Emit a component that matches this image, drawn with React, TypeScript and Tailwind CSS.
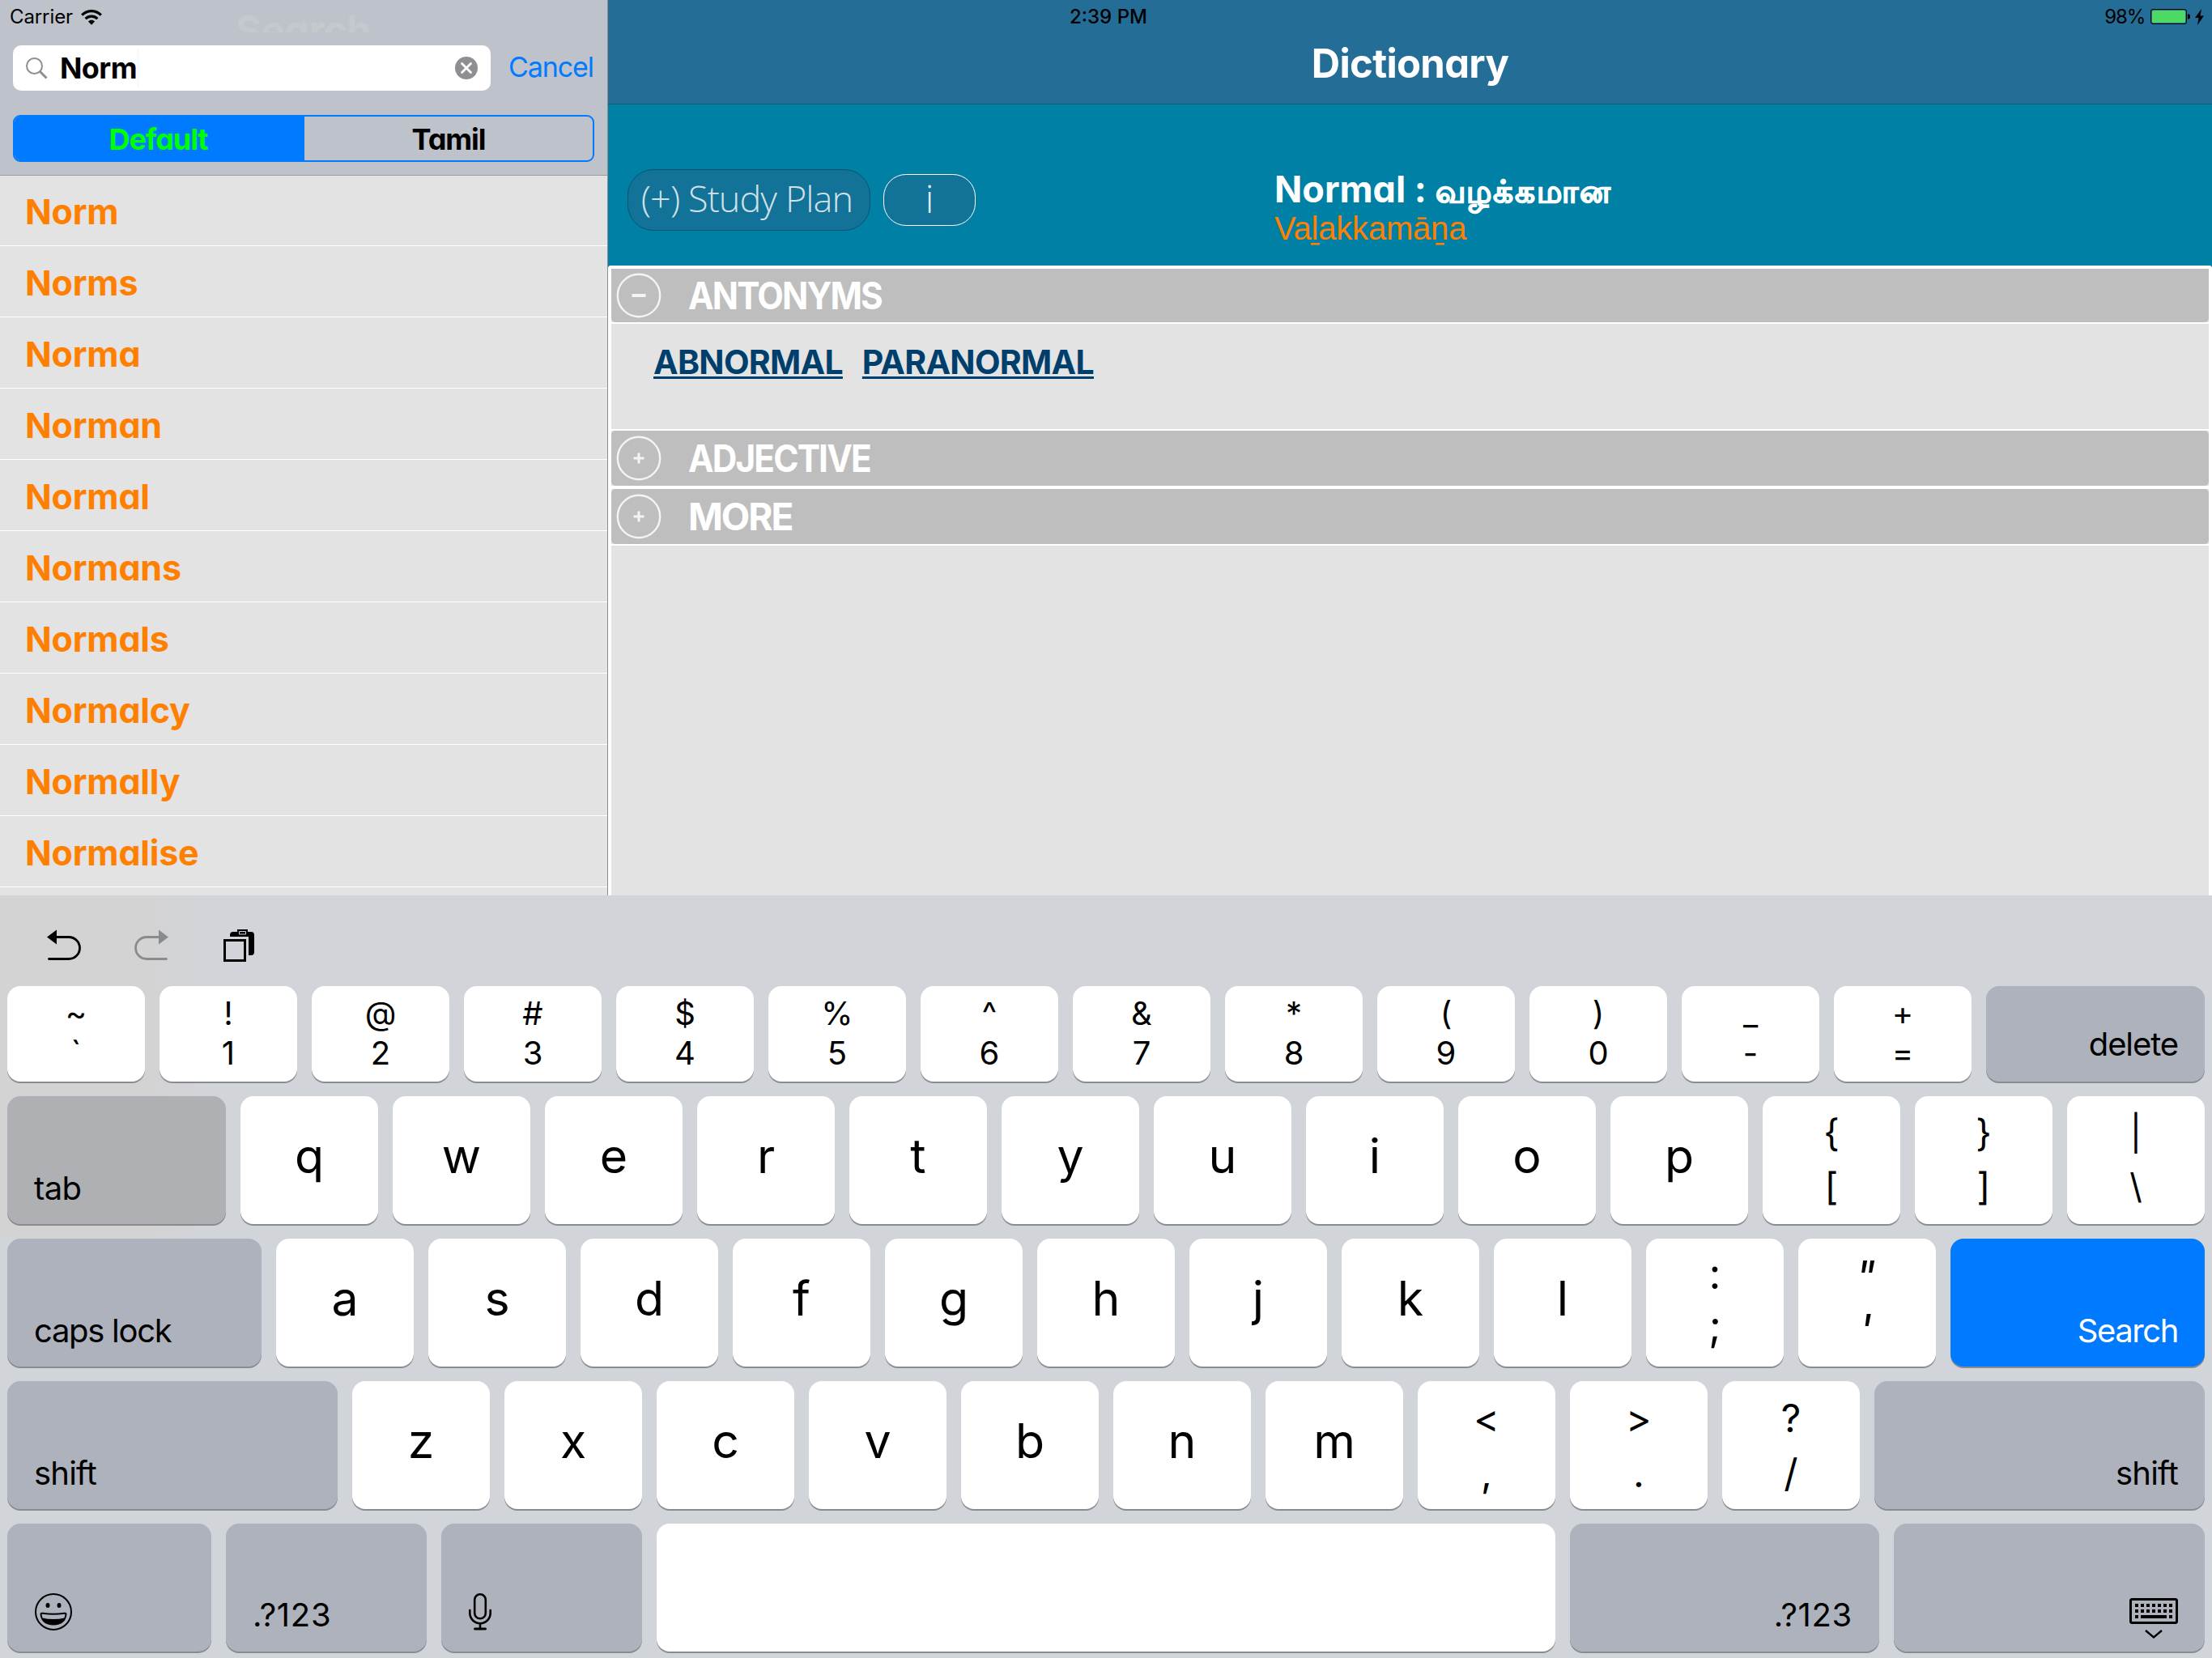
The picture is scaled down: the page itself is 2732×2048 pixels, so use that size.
import React from 'react';

const words = ['Norm', 'Norms', 'Norma', 'Norman', 'Normal', 'Normans', 'Normals', 'Normalcy', 'Normally', 'Normalise'];

const numberRow = [
  ['~', '`'], ['!', '1'], ['@', '2'], ['#', '3'], ['$', '4'], ['%', '5'], ['^', '6'],
  ['&', '7'], ['*', '8'], ['(', '9'], [')', '0'], ['_', '-'], ['+', '='],
];

const gothic = "font-['Inter',sans-serif] font-bold [font-feature-settings:'cv11']";

function LetterKey({ label }: { label: string }) {
  return (
    <div className="w-[170px] h-full shrink-0 bg-white rounded-2xl shadow-[0_2px_0_#898b8f] pt-[44px] text-center text-[59px] leading-[60px]">
      {label}
    </div>
  );
}

function DoubleKey({ top, bottom, className = 'pt-[12px] text-[48px] leading-[68px]' }: { top: string; bottom: string; className?: string }) {
  return (
    <div className={`w-[170px] h-full shrink-0 bg-white rounded-2xl shadow-[0_2px_0_#898b8f] text-center ${className}`}>
      <div>{top}</div>
      <div>{bottom}</div>
    </div>
  );
}

function DarkKey({ children, className }: { children?: React.ReactNode; className: string }) {
  return (
    <div className={`h-full shrink-0 rounded-2xl shadow-[0_2px_0_#898b8f] pl-[33px] pr-[33px] flex items-end text-[40px] leading-[48px] ${className}`}>
      {children}
    </div>
  );
}

function Section({ title, open, className, titleClass }: { title: string; open?: boolean; className: string; titleClass: string }) {
  return (
    <div className={`bg-[#bebebe] flex items-center pl-[6px] ${className}`}>
      <svg width="56" height="56" viewBox="0 0 56 56" fill="none" stroke="#f4f4f4">
        <circle cx="28" cy="28" r="26.2" strokeWidth="2.4" />
        {open ? <path d="M19.5 28h17" strokeWidth="4" /> : <path d="M21.5 28h13M28 21.5v13" strokeWidth="3" />}
      </svg>
      <h2 className={`ml-[33px] text-[46px] leading-[56px] text-white origin-left ${titleClass} ${gothic}`}>{title}</h2>
    </div>
  );
}

export default function App() {
  return (
    <div className="w-[2732px] h-[2048px] overflow-hidden flex flex-col bg-[#e3e3e3] text-black font-['Inter',sans-serif]">
      <div className="h-[1106px] flex shrink-0 relative">
        <aside className="w-[751px] shrink-0 border-r border-[#8e8e8e] overflow-hidden">
          <div className="h-[217px] bg-[#bec2ca] border-b border-[#999b9f]">
            <div className="h-[40px] overflow-hidden flex relative">
              <div className="flex items-center pl-[12px] pt-[2px] gap-[10px] text-[24px] tracking-[-0.1px]">
                <span>Carrier</span>
                <svg width="26" height="19" viewBox="0 0 26 19" fill="none" stroke="#000" strokeWidth="3.2">
                  <path d="M1.2 6.6C8-.1 18-.1 24.8 6.6" />
                  <path d="M5.6 11.2c4.3-4 10.5-4 14.8 0" />
                  <path d="M13 18.8 8.9 14.4c2.5-2.2 5.7-2.2 8.2 0z" fill="#000" stroke="none" />
                </svg>
              </div>
              <div className={`absolute left-[291px] top-[8px] text-[49px] leading-[60px] tracking-[-0.5px] text-[#c7c8cd] ${gothic}`}>Search</div>
            </div>
            <div className="flex items-center pl-[16px] pt-[16px]">
              <div className="w-[590px] h-[56px] bg-white rounded-[10px] flex items-center pl-[16px] pr-[16px]">
                <svg width="27" height="27" viewBox="0 0 27 27" fill="none" stroke="#8e8e93">
                  <circle cx="10.5" cy="10.5" r="9.5" strokeWidth="2" />
                  <path d="M17.3 17.3 25.5 25.5" strokeWidth="3" />
                </svg>
                <span className={`ml-[15px] text-[36px] tracking-[-0.6px] ${gothic}`}>Norm</span>
                <span className="w-[3px] h-[47px] bg-[#f8f8ff]" />
                <svg className="ml-auto" width="28" height="28" viewBox="0 0 28 28">
                  <circle cx="14" cy="14" r="14" fill="#8e8e93" />
                  <path d="M8.5 8.5l11 11M19.5 8.5l-11 11" stroke="#fff" strokeWidth="2.8" strokeLinecap="round" />
                </svg>
              </div>
              <span className="ml-[22px] mb-[3px] text-[34px] leading-[52px] tracking-[-1.1px] text-[#007aff]">Cancel</span>
            </div>
            <div className={`mt-[30px] ml-[16px] w-[718px] h-[58px] rounded-[9px] border-2 border-[#007aff] overflow-hidden flex text-[36px] leading-[56px] text-center tracking-[-1.1px] ${gothic}`}>
              <div className="w-[358px] pr-[3px] bg-[#007aff] text-[#00ff00]">Default</div>
              <div className="flex-1">Tamil</div>
            </div>
          </div>
          <ul>
            {words.map((word, i) => (
              <li
                key={word}
                className={`${i === 0 ? 'h-[87px]' : 'h-[88px]'} border-b border-white pl-[31px] pt-[3px] flex items-center text-[43px] tracking-[-0.2px] text-[#ff8000] ${gothic}`}
              >
                {word}
              </li>
            ))}
          </ul>
        </aside>

        <main className="flex-1 flex flex-col">
          <header className="h-[129px] bg-[#246d96] border-b border-[#0f5c78] pt-[49px] text-center">
            <h1 className={`text-[49px] leading-[60px] tracking-[-0.7px] text-white ${gothic}`}>Dictionary</h1>
          </header>
          <div className="h-[199px] bg-[#0080a5] flex items-start pl-[24px]">
            <div className="mt-[80px] w-[300px] h-[76px] rounded-[32px] bg-[#127297] border border-[#07546f] pr-[5px] text-center text-[45px] leading-[70px] text-[#d0e1e9] font-['Open_Sans',sans-serif] font-light tracking-[-0.9px] whitespace-nowrap">
              (+) Study Plan
            </div>
            <div className="mt-[86px] ml-[16px] w-[114px] h-[64px] rounded-[28px] bg-[#127297] border border-white text-center text-[47px] leading-[58px] text-[#e2edf2] font-['Open_Sans',sans-serif] font-light">
              i
            </div>
            <div className="mt-[75px] ml-[369px]">
              <div className={`h-[60px] text-[45px] leading-[60px] text-white whitespace-nowrap ${gothic}`}>
                Normal : <span className="text-[39px] tracking-[1.9px] [-webkit-text-stroke:1.1px_white]">வழக்கமான</span>
              </div>
              <div className="mt-[-4px] text-[40px] leading-[44px] tracking-[-0.2px] text-[#ff8000] font-['Liberation_Sans',sans-serif] whitespace-nowrap">Vaḻakkamāṉa</div>
            </div>
          </div>
          <div className="flex-1 bg-[#0080a5]">
            <div className="h-full bg-[#e3e3e3] border-x-4 border-t-4 border-white rounded-t-[4px]">
              <Section title="ANTONYMS" open className="h-[66px] rounded-b-[5px]" titleClass="tracking-[-2px] scale-x-[0.92]" />
              <div className="h-[134px] border-y-2 border-white pl-[52px] pt-[23px] text-[41px] leading-[48px] tracking-[-0.7px]">
                <span className={`text-[#003e6b] underline decoration-[3px] underline-offset-[3px] ${gothic}`}>ABNORMAL</span>
                <span className="text-[#f7dada] tracking-[0.3px]">, </span>
                <span className={`text-[#003e6b] underline decoration-[3px] underline-offset-[3px] ${gothic}`}>PARANORMAL</span>
              </div>
              <Section title="ADJECTIVE" className="h-[68px] rounded-[5px]" titleClass="tracking-[-2px] scale-x-[0.92]" />
              <div className="h-1 bg-white" />
              <Section title="MORE" className="h-[68px] rounded-[5px]" titleClass="tracking-[-2px]" />
              <div className="h-0.5 bg-white" />
            </div>
          </div>
        </main>

        {/* status bar items lying over both panes */}
        <div className="absolute left-[1321px] top-[6px] text-[24px] leading-[30px] font-medium">2:39 PM</div>
        <div className="absolute right-[10px] top-[6px] flex items-center text-[24px] leading-[30px]">
          <span className="tracking-[-1.2px]">98%</span>
          <svg className="ml-[7px]" width="50" height="20" viewBox="0 0 50 20">
            <rect x="0.5" y="0.5" width="44" height="18" rx="2.5" fill="none" stroke="#000" />
            <rect x="2" y="2" width="41" height="15" rx="1.5" fill="#4cd964" />
            <path d="M46 6.5h1q2 0 2 3t-2 3h-1z" />
          </svg>
          <svg className="ml-[5px]" width="11" height="20" viewBox="0 0 11 20">
            <path d="M8 0 0 11h4.5L3 20l8-11.5H6.5z" />
          </svg>
        </div>
      </div>

      <div className="flex-1 px-[9px] bg-[#d1d4d9] bg-[linear-gradient(90deg,#d3d3d4_190px,#d1d4d9_260px)] bg-[length:100%_424px] bg-no-repeat">
        <div className="h-[112px] flex items-start pt-[42px] pl-[49px]">
          <svg width="43" height="40" viewBox="0 0 43 40" fill="none" stroke="#000" strokeWidth="2.8">
            <path d="M0 9.5 12 .5v18z" fill="#000" stroke="none" />
            <path d="M10 9.5h17a13.5 13.5 0 0 1 0 27H2.500" strokeLinecap="round" />
          </svg>
          <svg className="ml-[65px]" width="43" height="40" viewBox="0 0 43 40" fill="none" stroke="#8a8b8d" strokeWidth="2.8">
            <path d="M42 9.5 30 .5v18z" fill="#8a8b8d" stroke="none" />
            <path d="M32 9.5H15a13.5 13.5 0 0 0 0 27h24.5" strokeLinecap="round" />
          </svg>
          <svg className="ml-[67px]" width="38" height="40" viewBox="0 0 38 40">
            <path d="M8 9V7q0-4 4-4h5V0h13v3h4q4 0 4 4v21q0 4-4 4h-3V9z" />
            <path d="M19.5 2.5h8V6h-8z" fill="none" stroke="#d1d4d9" />
            <rect x="1.5" y="13.5" width="25" height="25" fill="none" stroke="#000" strokeWidth="3" />
          </svg>
        </div>

        <div className="flex flex-col gap-[18px]">
          <div className="h-[118px] flex gap-[18px]">
            {numberRow.map(([top, bottom]) => (
              <div key={top} className="w-[170px] h-full shrink-0 bg-white rounded-2xl shadow-[0_2px_0_#898b8f] pt-[9px] text-center text-[40px] leading-[49px]">
                <div>{top}</div>
                <div>{bottom}</div>
              </div>
            ))}
            <DarkKey className="w-[270px] bg-[#aeb2bc] justify-end pb-[22px] tracking-[-1.1px]">delete</DarkKey>
          </div>

          <div className="h-[158px] flex gap-[18px]">
            <DarkKey className="w-[270px] bg-[#afb0b4] pb-[20px] tracking-[-0.6px]">tab</DarkKey>
            {['q', 'w', 'e', 'r', 't', 'y', 'u', 'i', 'o', 'p'].map((k) => <LetterKey key={k} label={k} />)}
            <DoubleKey top="{" bottom="[" className="pt-[12px] text-[46px] leading-[66px]" />
            <DoubleKey top="}" bottom="]" className="pt-[12px] text-[46px] leading-[66px]" />
            <DoubleKey top="|" bottom="\" className="pt-[12px] text-[43px] leading-[66px]" />
          </div>

          <div className="h-[158px] flex gap-[18px]">
            <DarkKey className="w-[314px] bg-[#aeb2bc] pb-[20px] tracking-[-1.3px]">caps lock</DarkKey>
            {['a', 's', 'd', 'f', 'g', 'h', 'j', 'k', 'l'].map((k) => <LetterKey key={k} label={k} />)}
            <DoubleKey top=":" bottom=";" className="pt-[12px] text-[52px] leading-[64px]" />
            <DoubleKey top={'"'} bottom="'" className="pt-[14px] pr-[4px] text-[54px] leading-[66px] italic" />
            <DarkKey className="w-[314px] bg-[#007aff] text-white justify-end pb-[20px] tracking-[-1.4px]">Search</DarkKey>
          </div>

          <div className="h-[158px] flex gap-[18px]">
            <DarkKey className="w-[408px] bg-[#aeb2bc] pb-[20px] tracking-[-0.8px]">shift</DarkKey>
            {['z', 'x', 'c', 'v', 'b', 'n', 'm'].map((k) => <LetterKey key={k} label={k} />)}
            <DoubleKey top="<" bottom="," />
            <DoubleKey top=">" bottom="." />
            <DoubleKey top="?" bottom="/" />
            <DarkKey className="w-[408px] bg-[#aeb2bc] justify-end pb-[20px] tracking-[-0.8px]">shift</DarkKey>
          </div>

          <div className="h-[158px] flex gap-[18px]">
            <DarkKey className="w-[252px] bg-[#aeb2bc] pb-[26px]">
              <svg className="ml-px" width="46" height="46" viewBox="0 0 46 46">
                <circle cx="23" cy="23" r="22" fill="none" stroke="#000" strokeWidth="2" />
                <ellipse cx="16" cy="15" rx="2.5" ry="3" />
                <ellipse cx="30" cy="15" rx="2.5" ry="3" />
                <path d="M7.5 26q0-1.500 2-1.300 13.500 2 27 0 2-.2 2 1.300Q37 38.500 23 38.500T7.500 26z" fill="none" stroke="#000" strokeWidth="2" />
                <path d="M9 30.5q14 3 28 0-3 8-14 8T9 30.5z" />
              </svg>
            </DarkKey>
            <DarkKey className="w-[248px] bg-[#aeb2bc] pb-[21px] tracking-[0.7px]">.?123</DarkKey>
            <DarkKey className="w-[248px] bg-[#aeb2bc] pb-[26px]">
              <svg className="ml-px" width="28" height="46" viewBox="0 0 28 46" fill="none" stroke="#000" strokeWidth="2.6">
                <rect x="7.2" y="1.3" width="13.6" height="30" rx="6.8" />
                <path d="M1.3 21v3.5a12.7 12.7 0 0 0 25.4 0V21M14 37.5V44" strokeLinecap="round" />
                <path d="M7.5 44h13" strokeWidth="3" strokeLinecap="round" />
              </svg>
            </DarkKey>
            <div className="w-[1110px] shrink-0 bg-white rounded-2xl shadow-[0_2px_0_#898b8f]" />
            <DarkKey className="w-[382px] bg-[#aeb2bc] justify-end pb-[21px] tracking-[0.7px]">.?123</DarkKey>
            <DarkKey className="w-[384px] bg-[#aeb2bc] justify-end pb-[15px]">
              <svg width="60" height="51" viewBox="0 0 60 51" fill="none" stroke="#000">
                <rect x="1.5" y="1.5" width="57" height="29" rx="2" strokeWidth="3" />
                <path d="M7 9h46M7 16h46" strokeWidth="4" strokeDasharray="4 3" />
                <path d="M7 23h4M14 23h32M49 23h4" strokeWidth="4" />
                <path d="M20 40l10 8.5L40 40" strokeWidth="2.4" />
              </svg>
            </DarkKey>
          </div>
        </div>
      </div>
    </div>
  );
}
